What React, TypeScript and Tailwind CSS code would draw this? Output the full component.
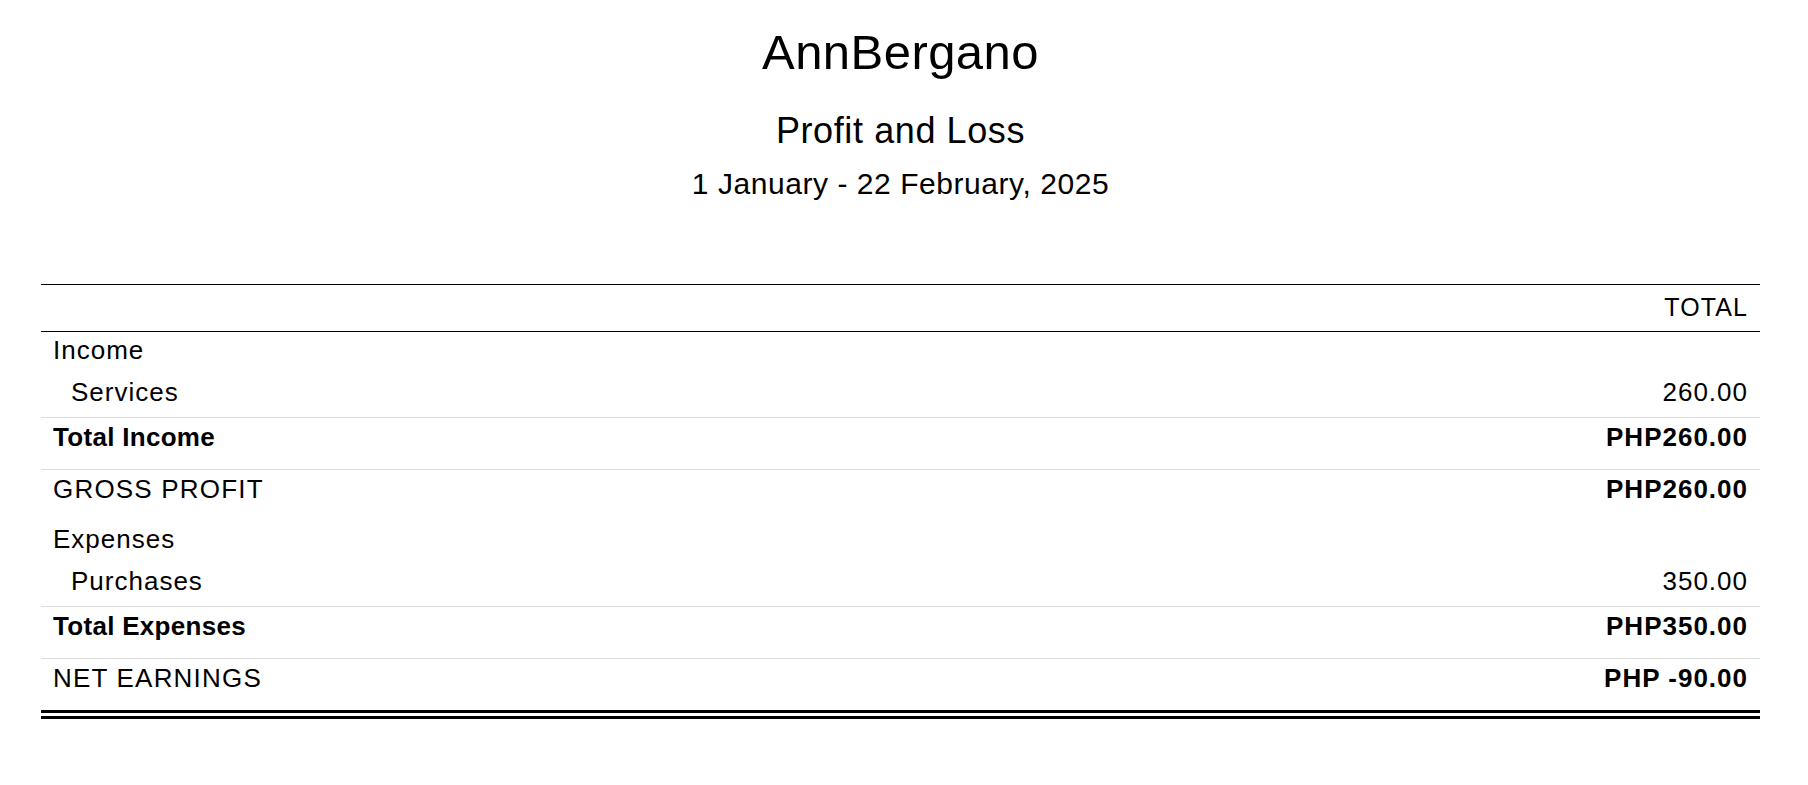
type Row =
  | { kind: "section"; label: string }
  | { kind: "account"; label: string; amount: string }
  | { kind: "total"; label: string; amount: string; boldLabel: boolean };

const rows: Row[] = [
  { kind: "section", label: "Income" },
  { kind: "account", label: "Services", amount: "260.00" },
  { kind: "total", label: "Total Income", amount: "PHP260.00", boldLabel: true },
  { kind: "total", label: "GROSS PROFIT", amount: "PHP260.00", boldLabel: false },
  { kind: "section", label: "Expenses" },
  { kind: "account", label: "Purchases", amount: "350.00" },
  { kind: "total", label: "Total Expenses", amount: "PHP350.00", boldLabel: true },
  { kind: "total", label: "NET EARNINGS", amount: "PHP -90.00", boldLabel: false },
];

function ReportRow({ row }: { row: Row }) {
  if (row.kind === "section") {
    return (
      <div className="h-[37px] pt-[3px] pl-[12px] text-[26px] leading-[30px] tracking-[1px]">{row.label}</div>
    );
  }
  if (row.kind === "account") {
    return (
      <div className="flex h-[48px] justify-between pt-[8px] pl-[30px] pr-[12px] text-[26px] leading-[30px] tracking-[1px]">
        <span>{row.label}</span>
        <span>{row.amount}</span>
      </div>
    );
  }
  return (
    <div className="flex h-[52px] justify-between border-t border-[#dddddd] pt-[4px] pl-[12px] pr-[12px] text-[26px] leading-[30px]">
      <span className={row.boldLabel ? "font-bold tracking-[0.3px]" : "tracking-[1.2px]"}>{row.label}</span>
      <span className="font-bold tracking-[1px]">{row.amount}</span>
    </div>
  );
}

export default function App() {
  return (
    <div className="min-h-screen bg-white font-['Liberation_Sans',Arial,sans-serif] text-black">
      <div className="ml-[41px] w-[1719px]">
        <div className="text-center">
          <h1 className="pt-[24px] text-[49px] leading-[56px] tracking-[0.45px]">AnnBergano</h1>
          <h2 className="mt-[30px] text-[36px] leading-[42px] tracking-[0.6px]">Profit and Loss</h2>
          <p className="mt-[14px] text-[30px] leading-[36px] tracking-[0.55px]">1 January - 22 February, 2025</p>
        </div>

        <div className="mt-[82px] border-b-[9px] border-double border-black">
          <div className="flex h-[48px] items-center justify-end border-y border-black pr-[12px] text-[25px] tracking-[1.1px]">
            TOTAL
          </div>
          {rows.map((row, i) => (
            <ReportRow key={i} row={row} />
          ))}
        </div>
      </div>
    </div>
  );
}
